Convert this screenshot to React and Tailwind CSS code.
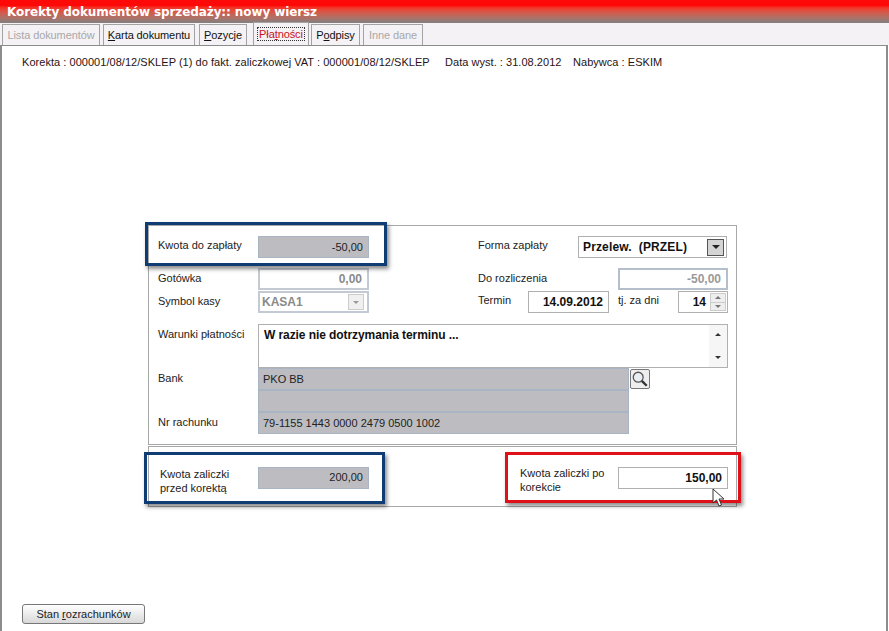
import React from "react";

const font = "font-['Liberation_Sans',Arial,sans-serif]";
const boldValue = "font-bold text-[12px]";

const Tab = ({ children, disabled, active, className = "" }) => (
  <div
    className={`flex items-center justify-center border border-[#a3a3a3] border-b-0 bg-[#f4f2f5] text-[11px] tracking-[-0.1px] ${
      disabled ? "text-[#a8a8a8]" : "text-[#111]"
    } ${active ? "h-[23px] text-[#c8101c]" : "h-[21px]"} ${className}`}
  >
    {children}
  </div>
);

const Label = ({ children, className = "" }) => (
  <div className={`text-[11px] leading-[14px] text-[#222] ${className}`}>{children}</div>
);

// right aligned value box, used all over the form
const Field = ({ children, className = "" }) => (
  <div className={`flex items-center justify-end h-[22px] pr-[5px] text-[11px] ${className}`}>{children}</div>
);

const greyBox = "bg-[#bdbdc1] border border-[#a9b4c4] text-[#222]";
const whiteBox = "bg-white border border-[#b0b0b0]";

const Highlight = ({ className }) => (
  <div className={`absolute border-[3px] shadow-[2px_3px_4px_rgba(0,0,0,0.45)] ${className}`} />
);

const Magnifier = () => (
  <svg viewBox="0 0 20 20" className="w-[18px] h-[18px]">
    <circle cx="8" cy="8" r="5.5" fill="#e8eef4" stroke="#555" strokeWidth="1.4" />
    <path d="M12 12l5.5 5.5" stroke="#333" strokeWidth="2.6" />
  </svg>
);

const Cursor = () => (
  <svg viewBox="0 0 13 20" className="absolute left-[564px] top-[263px] w-[13px] h-[20px]">
    <path d="M1 1v14l3.5-3 2.5 6 2.5-1-2.5-6h5z" fill="#fff" stroke="#333" strokeWidth="1" />
  </svg>
);

export default function App() {
  return (
    <div className={`w-[889px] h-[631px] flex flex-col bg-white overflow-hidden ${font}`}>
      <div className="h-[23px] shrink-0 pl-[7px] flex items-center bg-gradient-to-b from-[#ff0808] from-25% to-[#808080] text-white font-bold text-[12px] tracking-[-0.1px] font-['DejaVu_Sans',sans-serif]">
        Korekty dokumentów sprzedaży:: nowy wiersz
      </div>

      <div className="h-[22px] shrink-0 flex items-end pl-[2px] bg-[#f4f2f5]">
        <Tab disabled className="w-[98px]">Lista dokumentów</Tab>
        <Tab className="w-[92px] ml-[3px]"><span><u>K</u>arta dokumentu</span></Tab>
        <Tab className="w-[48px] ml-[4px]"><span><u>P</u>ozycje</span></Tab>
        <Tab active className="w-[56px] ml-[6px]">
          <span className="border border-dotted border-[#333] px-[1px] leading-[12px] text-[#c8101c]">
            Pła<u>t</u>ności
          </span>
        </Tab>
        <Tab className="w-[49px] ml-[2px]"><span>P<u>o</u>dpisy</span></Tab>
        <Tab disabled className="w-[60px] ml-[3px]">Inne dane</Tab>
      </div>

      <div className="flex-1 flex flex-col border-t border-l-2 border-r-2 border-[#8c8c8c] mr-[1px] min-h-0">
        <div className="pl-[20px] pt-[9px] flex text-[11px] leading-[14px] text-[#2a1214] tracking-[0.04px] whitespace-nowrap">
          <span className="w-[423px]">Korekta : 000001/08/12/SKLEP (1) do fakt. zaliczkowej VAT : 000001/08/12/SKLEP</span>
          <span className="w-[128px]">Data wyst. : 31.08.2012</span>
          <span>Nabywca : ESKIM</span>
        </div>

        <div className="relative ml-[146px] mt-[156px] w-[589px]">
          <div className="h-[220px] border border-[#a8a8a8] pt-[10px] pl-[9px]">
            <div className="flex h-[22px] items-center">
              <Label className="w-[100px] mb-[4px]">Kwota do zapłaty</Label>
              <Field className={`w-[111px] ${greyBox}`}>-50,00</Field>
              <Label className="ml-[109px] w-[100px] mb-[4px]">Forma zapłaty</Label>
              <div className={`w-[149px] h-[22px] flex items-center justify-between pl-[4px] pr-[1px] ${whiteBox} ${boldValue} text-[#111]`}>
                <span className="tracking-[0.15px]">Przelew.&nbsp; (PRZEL)</span>
                <span className="w-[17px] h-[17px] mr-[1px] border border-[#555] bg-[#d4d4d4] flex items-center justify-center">
                  <span className="border-x-[4px] border-x-transparent border-t-[4px] border-t-[#222]" />
                </span>
              </div>
            </div>

            <div className="flex h-[22px] items-center mt-[10px]">
              <Label className="w-[100px] mb-[2px]">Gotówka</Label>
              <Field className={`w-[111px] border-2 border-[#c3cad4] bg-white pr-[4px] ${boldValue} text-[#8a8a8a]`}>0,00</Field>
              <Label className="ml-[109px] w-[140px] mb-[2px]">Do rozliczenia</Label>
              <Field className={`w-[110px] border-2 border-[#b5bfcc] bg-white ${boldValue} text-[#9a9a9a]`}>-50,00</Field>
            </div>

            <div className="flex h-[22px] items-center mt-[1px]">
              <Label className="w-[100px] mb-[2px]">Symbol kasy</Label>
              <div className="w-[111px] h-[22px] flex items-center justify-between pl-[2px] pr-[3px] border-2 border-[#c3cad4] bg-white">
                <span className={`${boldValue} text-[#8a8a8a]`}>KASA1</span>
                <span className="w-[16px] h-[16px] border border-[#ccc] bg-[#f0f0f0] flex items-center justify-center">
                  <span className="border-x-[3px] border-x-transparent border-t-[3px] border-t-[#999]" />
                </span>
              </div>
              <Label className="ml-[109px] w-[50px] mb-[4px]">Termin</Label>
              <Field className={`w-[81px] pr-[2px] ${whiteBox} ${boldValue} text-[#111]`}>14.09.2012</Field>
              <Label className="ml-[9px] w-[60px] mb-[4px]">tj. za dni</Label>
              <div className={`w-[50px] h-[22px] flex items-center justify-end ${whiteBox} ${boldValue} text-[#111]`}>
                <span className="mr-[4px]">14</span>
                <span className="flex flex-col w-[16px] h-[18px] mr-[1px] bg-[#eee] border border-[#ccc]">
                  <span className="flex-1 flex items-center justify-center border-b border-[#ccc]">
                    <span className="border-x-[3px] border-x-transparent border-b-[3px] border-b-[#777]" />
                  </span>
                  <span className="flex-1 flex items-center justify-center">
                    <span className="border-x-[3px] border-x-transparent border-t-[3px] border-t-[#777]" />
                  </span>
                </span>
              </div>
            </div>

            <div className="flex mt-[11px]">
              <Label className="w-[100px] pt-[3px]">Warunki płatności</Label>
              <div className={`w-[470px] h-[44px] flex justify-between pl-[5px] ${whiteBox}`}>
                <span className={`pt-[1px] ${boldValue} tracking-[-0.08px] text-[#111]`}>W razie nie dotrzymania terminu ...</span>
                <span className="w-[18px] flex flex-col items-center justify-between py-[8px] bg-[#f6f6f6]">
                  <span className="border-x-[3px] border-x-transparent border-b-[3px] border-b-[#333]" />
                  <span className="border-x-[3px] border-x-transparent border-t-[3px] border-t-[#333]" />
                </span>
              </div>
            </div>

            <div className="flex">
              <Label className="w-[100px] pt-[3px]">Bank</Label>
              <div className={`w-[371px] h-[22px] flex items-center pl-[4px] text-[11px] ${greyBox}`}>PKO BB</div>
              <div className="w-[20px] h-[20px] ml-[1px] mt-[1px] border border-[#777] rounded-[2px] bg-[#eee] flex items-center justify-center">
                <Magnifier />
              </div>
            </div>
            <div className="flex">
              <div className="w-[100px]" />
              <div className={`w-[371px] h-[22px] ${greyBox}`} />
            </div>
            <div className="flex">
              <Label className="w-[100px] pt-[3px]">Nr rachunku</Label>
              <div className={`w-[371px] h-[22px] flex items-center pl-[4px] text-[11px] ${greyBox}`}>79-1155 1443 0000 2479 0500 1002</div>
            </div>
          </div>

          <div className="h-[61px] mt-[1px] border border-[#a8a8a8] pl-[11px] flex items-center pt-[2px]">
            <Label className="w-[98px] mt-[6px]">Kwota zaliczki<br />przed korektą</Label>
            <Field className={`w-[111px] ${greyBox}`}>200,00</Field>
            <Label className="ml-[151px] w-[98px] mt-[4px]">Kwota zaliczki po<br />korekcie</Label>
            <Field className={`w-[110px] pr-[3px] ${whiteBox} ${boldValue} text-[#111]`}>150,00</Field>
          </div>

          <Highlight className="left-[-3px] top-[-3px] w-[242px] h-[44px] border-[#0f3d73]" />
          <Highlight className="left-[-4px] top-[227px] w-[241px] h-[52px] border-[#0f3d73]" />
          <Highlight className="left-[357px] top-[227px] w-[236px] h-[51px] border-[#e01018]" />
          <Cursor />
        </div>

        <div className="mt-auto mb-[6px] ml-[20px]">
          <button className="w-[123px] h-[20px] border border-[#777] rounded-[3px] bg-gradient-to-b from-white to-[#d8d8d8] text-[11px] text-[#222]">
            <span>Stan <u>r</u>ozrachunków</span>
          </button>
        </div>
      </div>
    </div>
  );
}
